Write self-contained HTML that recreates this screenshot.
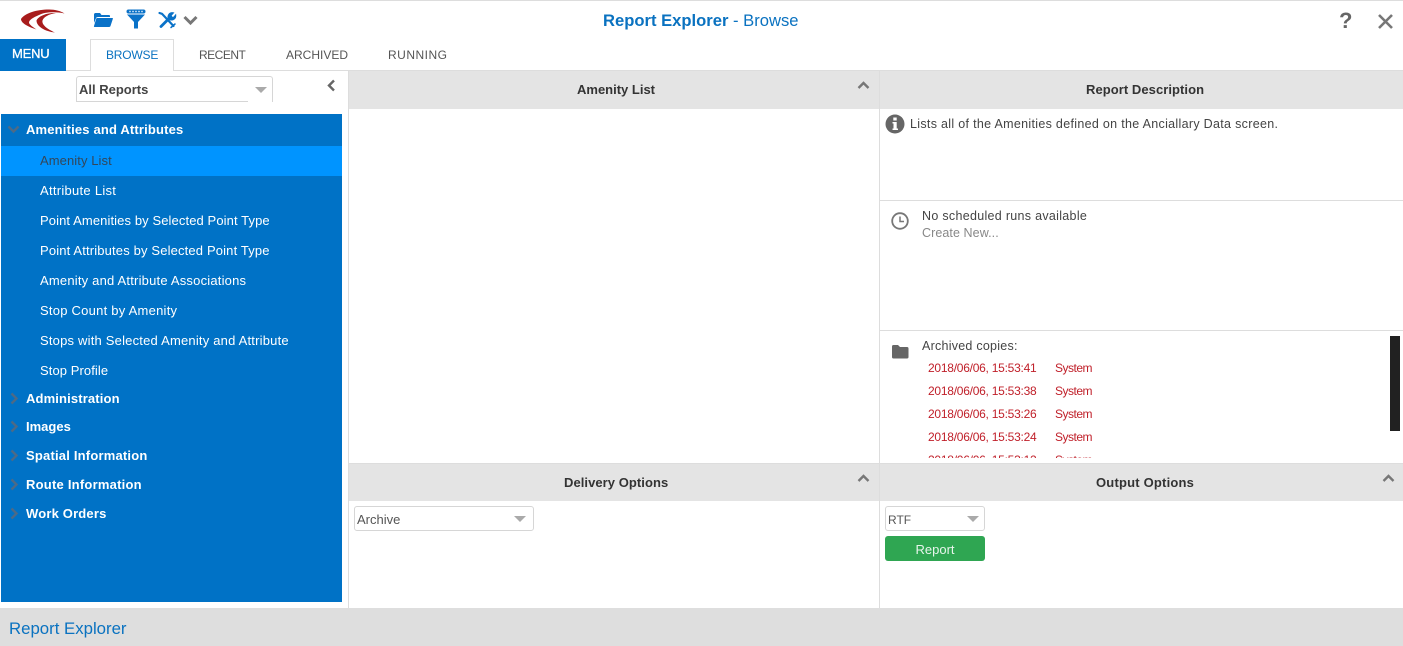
<!DOCTYPE html>
<html><head><meta charset="utf-8"><style>
html,body{margin:0;padding:0;background:#fff}
#p{position:relative;width:1403px;height:646px;overflow:hidden;background:#fff;font-family:"Liberation Sans",sans-serif;font-size:13px;color:#444}
#p div,#p svg{position:absolute}
.t{white-space:nowrap;line-height:18px}
.hd{background:#e4e4e4;height:38px;line-height:37px;font-weight:bold;font-size:13px;color:#333}
.hd span{position:absolute;white-space:nowrap}
.it{left:40px;color:#fff;white-space:nowrap;line-height:18px;font-size:13px}
.gr{left:26px;color:#fff;font-weight:bold;white-space:nowrap;line-height:18px;font-size:13px}
.tab{top:47px;font-size:12px;line-height:16px;color:#555;white-space:nowrap}
.sel{background:#fff;border:1px solid #d6d6d6;border-radius:3px;box-sizing:border-box;height:25px;line-height:26px;padding-left:2px;color:#555;font-size:13px}
.red{color:#c0202a;font-size:12px;line-height:16px;white-space:nowrap;letter-spacing:-.25px}
.sy{letter-spacing:-.5px}
</style></head><body><div id="p">
<div style="left:0;top:0;width:1403px;height:1px;background:#ddd"></div>

<svg style="left:15px;top:5px" width="60" height="32" viewBox="0 0 60 32"><g fill="#a81c1c"><path d="M6 14C10 8 22 4.500 34 4.500C40 4.500 46 6 49.500 8.500C40 6.500 30 7 24 10C18 12.500 14 15 14 17.500C14 19.500 18 22 21.500 24.500C14 22 6 18.500 6 14Z"/><path d="M21.500 15.500C23.500 11 32 7.500 41 8C34 9 28.500 12 27.500 15.500C26.500 19.500 32 24 40 27.500C30 26.500 21.500 21.500 21.500 15.500Z"/></g></svg>

<svg style="left:93px;top:12px" width="20" height="16" viewBox="0 0 20 16"><path d="M1 4V2.500C1 1.700 1.600 1 2.500 1H7L8.500 3H16C16.800 3 17 3.500 17 4V5H5C4 5 3.400 5.400 3 6.200L1 11Z" fill="#0a72c8"/><path d="M4.200 6H19.400C20 6 20 6.500 19.800 7L17.500 14C17.300 14.600 16.800 15 16 15H1.500C.9 15 .8 14.600 1 14L3.200 6.800C3.400 6.300 3.700 6 4.200 6Z" fill="#0a72c8"/></svg>

<svg style="left:126px;top:9px" width="20" height="20" viewBox="0 0 20 20"><rect x=".5" y=".5" width="19" height="4" rx="2" fill="#0a72c8"/><g fill="#cfe4f6"><circle cx="4" cy="2.500" r=".9"/><circle cx="7" cy="2.500" r=".9"/><circle cx="10" cy="2.500" r=".9"/><circle cx="13" cy="2.500" r=".9"/><circle cx="16" cy="2.500" r=".9"/></g><path d="M1 5.500H19L12 13V19.500H8V13Z" fill="#0a72c8"/></svg>

<svg style="left:158px;top:11px" width="19" height="18" viewBox="0 0 19 18"><g stroke="#0a72c8" fill="none" stroke-linecap="round"><path d="M3 15.500L11 7.500" stroke-width="2.800"/><path d="M10.500 8C9.500 4.500 11.500 1.500 15 2L12.800 4.500L13.800 6.500L15.800 6.500L17.500 4.500C17.800 7.500 14.800 9.500 11.800 8.500" stroke-width="1.500" fill="#0a72c8"/><path d="M1.500 2L4 2.800L15.500 15" stroke-width="2.200"/><path d="M13 16.500L17 13" stroke-width="1.500"/></g></svg>

<svg style="left:183px;top:15px" width="15" height="11" viewBox="0 0 15 11"><path d="M1.500 2L7.500 8L13.500 2" fill="none" stroke="#777" stroke-width="3"/></svg>

<div class="t" style="left:603px;top:11px;font-size:16.600px;color:#0a72c0;line-height:20px"><b>Report Explorer</b> - Browse</div>
<div class="t" style="left:1339px;top:8px;font-size:22px;font-weight:bold;color:#666;line-height:26px">?</div>
<svg style="left:1377px;top:13px" width="17" height="17" viewBox="0 0 17 17"><path d="M2 2L15 15M15 2L2 15" stroke="#777" stroke-width="2.600"/></svg>

<div style="left:0;top:39px;width:66px;height:32px;background:#0072c6;color:#fff;font-size:13px;line-height:29px;padding-left:12px;box-sizing:border-box;-webkit-text-stroke:.3px #fff;letter-spacing:-.2px">MENU</div>
<div style="left:66px;top:70px;width:1337px;height:1px;background:#ddd"></div>
<div style="left:90px;top:39px;width:84px;height:32px;box-sizing:border-box;border:1px solid #ddd;border-bottom:0;background:#fff"></div>
<div class="tab" style="left:106px;color:#0a72c0;letter-spacing:-.2px">BROWSE</div>
<div class="tab" style="left:199px;letter-spacing:-.5px">RECENT</div>
<div class="tab" style="left:286px">ARCHIVED</div>
<div class="tab" style="left:388px;letter-spacing:.5px">RUNNING</div>

<div style="left:76px;top:76px;width:197px;height:26px;box-sizing:border-box;border:1px solid #d6d6d6;border-bottom:0;border-radius:3px 3px 0 0"></div>
<div style="left:77px;top:101px;width:171px;height:1px;background:#d6d6d6"></div>
<div class="t" style="left:79px;top:81px;font-weight:bold;color:#444;font-size:13px">All Reports</div>
<svg style="left:255px;top:87px" width="12" height="7"><path d="M0 0H12L6 6Z" fill="#aaa"/></svg>
<svg style="left:326px;top:79px" width="10" height="13" viewBox="0 0 10 13"><path d="M8 1.500L3 6.500L8 11.500" fill="none" stroke="#666" stroke-width="2.400"/></svg>

<div style="left:1px;top:114px;width:341px;height:488px;background:#0072c6"></div>
<div style="left:1px;top:146px;width:341px;height:30px;background:#0094ff"></div>
<svg style="left:7px;top:125px" width="13" height="9" viewBox="0 0 13 9"><path d="M1.500 1.500L6.500 6.500L11.500 1.500" fill="none" stroke="#4d6a86" stroke-width="2.400"/></svg>
<div class="gr" style="top:121px;letter-spacing:.17px">Amenities and Attributes</div>
<div class="it" style="top:152px;color:#33475a;letter-spacing:.08px">Amenity List</div>
<div class="it" style="top:182px;letter-spacing:.28px">Attribute List</div>
<div class="it" style="top:212px;letter-spacing:.1px">Point Amenities by Selected Point Type</div>
<div class="it" style="top:242px;letter-spacing:.15px">Point Attributes by Selected Point Type</div>
<div class="it" style="top:272px;letter-spacing:.2px">Amenity and Attribute Associations</div>
<div class="it" style="top:302px;letter-spacing:.24px">Stop Count by Amenity</div>
<div class="it" style="top:332px;letter-spacing:.2px">Stops with Selected Amenity and Attribute</div>
<div class="it" style="top:362px;letter-spacing:.08px">Stop Profile</div>
<div class="gr" style="top:390px;letter-spacing:.14px">Administration</div>
<div class="gr" style="top:418px">Images</div>
<div class="gr" style="top:447px;letter-spacing:.2px">Spatial Information</div>
<div class="gr" style="top:476px;letter-spacing:.23px">Route Information</div>
<div class="gr" style="top:505px;letter-spacing:.18px">Work Orders</div>
<svg style="left:10px;top:392px" width="9" height="13" viewBox="0 0 9 13"><path d="M1.500 1.500L6.500 6.500L1.500 11.500" fill="none" stroke="#4d6a86" stroke-width="2.400"/></svg>
<svg style="left:10px;top:420px" width="9" height="13" viewBox="0 0 9 13"><path d="M1.500 1.500L6.500 6.500L1.500 11.500" fill="none" stroke="#4d6a86" stroke-width="2.400"/></svg>
<svg style="left:10px;top:449px" width="9" height="13" viewBox="0 0 9 13"><path d="M1.500 1.500L6.500 6.500L1.500 11.500" fill="none" stroke="#4d6a86" stroke-width="2.400"/></svg>
<svg style="left:10px;top:478px" width="9" height="13" viewBox="0 0 9 13"><path d="M1.500 1.500L6.500 6.500L1.500 11.500" fill="none" stroke="#4d6a86" stroke-width="2.400"/></svg>
<svg style="left:10px;top:507px" width="9" height="13" viewBox="0 0 9 13"><path d="M1.500 1.500L6.500 6.500L1.500 11.500" fill="none" stroke="#4d6a86" stroke-width="2.400"/></svg>

<div style="left:348px;top:71px;width:1px;height:537px;background:#ddd"></div>
<div style="left:879px;top:71px;width:1px;height:537px;background:#ddd"></div>
<div class="hd" style="left:349px;top:71px;width:530px"><span style="left:228px">Amenity List</span></div>
<div class="hd" style="left:880px;top:71px;width:523px"><span style="left:206px;letter-spacing:.06px">Report Description</span></div>
<div class="hd" style="left:349px;top:463px;width:530px;border-top:1px solid #ddd;height:37px"><span style="left:215px;letter-spacing:.06px">Delivery Options</span></div>
<div class="hd" style="left:880px;top:463px;width:523px;border-top:1px solid #ddd;height:37px"><span style="left:216px;letter-spacing:.2px">Output Options</span></div>
<svg style="left:857px;top:81px" width="13" height="9" viewBox="0 0 13 9"><path d="M1.500 7L6.500 2L11.500 7" fill="none" stroke="#777" stroke-width="2.400"/></svg>
<svg style="left:857px;top:474px" width="13" height="9" viewBox="0 0 13 9"><path d="M1.500 7L6.500 2L11.500 7" fill="none" stroke="#777" stroke-width="2.400"/></svg>
<svg style="left:1382px;top:474px" width="13" height="9" viewBox="0 0 13 9"><path d="M1.500 7L6.500 2L11.500 7" fill="none" stroke="#777" stroke-width="2.400"/></svg>

<svg style="left:885px;top:114px" width="20" height="20" viewBox="0 0 20 20"><circle cx="10" cy="10" r="9.500" fill="#666"/><rect x="8.300" y="3.500" width="3.400" height="3" fill="#fff"/><path d="M7.500 8H11.700V14.500H13V16H7.500V14.500H8.500V9.500H7.500Z" fill="#fff"/></svg>
<div class="t" style="left:910px;top:115px;font-size:12.500px;letter-spacing:.31px">Lists all of the Amenities defined on the Anciallary Data screen.</div>
<div style="left:880px;top:200px;width:523px;height:1px;background:#ddd"></div>
<svg style="left:891px;top:212px" width="18" height="18" viewBox="0 0 18 18"><circle cx="9" cy="9" r="7.800" fill="none" stroke="#777" stroke-width="1.800"/><path d="M9 4.500V9.500H13" fill="none" stroke="#777" stroke-width="1.500"/></svg>
<div class="t" style="left:922px;top:207px;font-size:12.500px;letter-spacing:.3px">No scheduled runs available</div>
<div class="t" style="left:922px;top:224px;font-size:12.500px;color:#888;letter-spacing:.08px">Create New...</div>
<div style="left:880px;top:330px;width:523px;height:1px;background:#ddd"></div>
<svg style="left:891px;top:344px" width="18" height="15" viewBox="0 0 18 15"><path d="M1 2.500C1 1.500 1.500 1 2.500 1H7L9 3H16C17 3 17.500 3.500 17.500 4.500V13C17.500 14 17 14.500 16 14.500H2.500C1.500 14.500 1 14 1 13Z" fill="#666"/></svg>
<div class="t" style="left:922px;top:337px;font-size:12.500px;letter-spacing:.25px">Archived copies:</div>
<div style="left:880px;top:360px;width:500px;height:98px;overflow:hidden">
<div class="red" style="left:48px;top:0">2018/06/06, 15:53:41</div><div class="red sy" style="left:175px;top:0">System</div>
<div class="red" style="left:48px;top:23px">2018/06/06, 15:53:38</div><div class="red sy" style="left:175px;top:23px">System</div>
<div class="red" style="left:48px;top:46px">2018/06/06, 15:53:26</div><div class="red sy" style="left:175px;top:46px">System</div>
<div class="red" style="left:48px;top:69px">2018/06/06, 15:53:24</div><div class="red sy" style="left:175px;top:69px">System</div>
<div class="red" style="left:48px;top:92px">2018/06/06, 15:53:12</div><div class="red sy" style="left:175px;top:92px">System</div>
</div>
<div style="left:1390px;top:336px;width:10px;height:95px;background:#212121"></div>

<div class="sel" style="left:354px;top:506px;width:180px">Archive</div>
<svg style="left:514px;top:516px" width="12" height="7"><path d="M0 0H12L6 6Z" fill="#aaa"/></svg>
<div class="sel" style="left:885px;top:506px;width:100px;font-size:12px">RTF</div>
<svg style="left:967px;top:516px" width="12" height="7"><path d="M0 0H12L6 6Z" fill="#aaa"/></svg>
<div style="left:885px;top:536px;width:100px;height:25px;background:#2fa652;border-radius:3px;color:#e8f5ec;text-align:center;line-height:27px;font-size:13px">Report</div>

<div style="left:0;top:608px;width:1403px;height:38px;background:#dedede"></div>
<div class="t" style="left:9px;top:620px;font-size:16.800px;color:#0a72c0">Report Explorer</div>
</div></body></html>
